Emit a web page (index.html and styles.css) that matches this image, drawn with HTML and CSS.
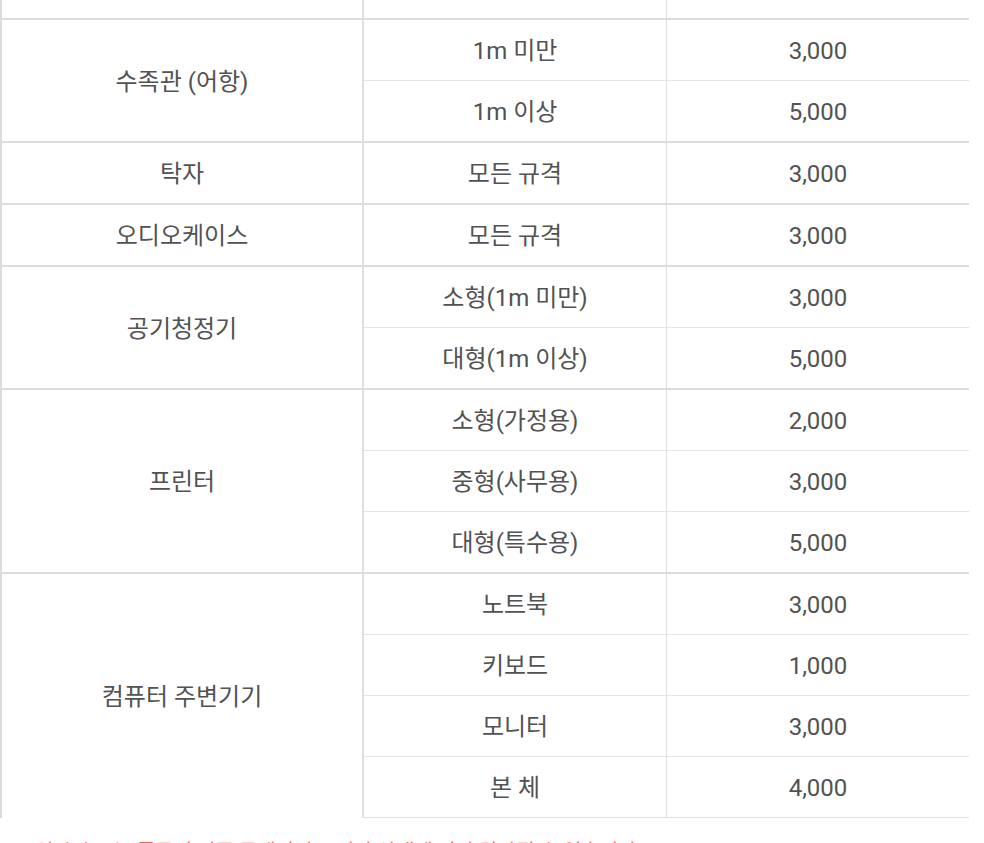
FILE: index.html
```html
<!DOCTYPE html>
<html lang="ko">
<head>
<meta charset="utf-8">
<title>수수료 표</title>
<link rel="stylesheet" href="styles.css">
</head>
<body>
<div class="page">
  <table class="fee">
    <colgroup>
      <col class="c1"><col class="c2"><col class="c3">
    </colgroup>
    <tbody>
      <tr class="prev">
        <td class="name"></td><td class="size">대형</td><td class="price">10,000</td>
      </tr>
      <tr class="grp">
        <td class="name" rowspan="2">수족관 (어항)</td><td class="size">1m 미만</td><td class="price">3,000</td>
      </tr>
      <tr>
        <td class="size">1m 이상</td><td class="price">5,000</td>
      </tr>
      <tr class="grp">
        <td class="name">탁자</td><td class="size">모든 규격</td><td class="price">3,000</td>
      </tr>
      <tr class="grp">
        <td class="name">오디오케이스</td><td class="size">모든 규격</td><td class="price">3,000</td>
      </tr>
      <tr class="grp">
        <td class="name" rowspan="2">공기청정기</td><td class="size">소형(1m 미만)</td><td class="price">3,000</td>
      </tr>
      <tr>
        <td class="size">대형(1m 이상)</td><td class="price">5,000</td>
      </tr>
      <tr class="grp">
        <td class="name" rowspan="3">프린터</td><td class="size">소형(가정용)</td><td class="price">2,000</td>
      </tr>
      <tr>
        <td class="size">중형(사무용)</td><td class="price">3,000</td>
      </tr>
      <tr>
        <td class="size">대형(특수용)</td><td class="price">5,000</td>
      </tr>
      <tr class="grp">
        <td class="name" rowspan="4">컴퓨터 주변기기</td><td class="size">노트북</td><td class="price">3,000</td>
      </tr>
      <tr>
        <td class="size">키보드</td><td class="price">1,000</td>
      </tr>
      <tr>
        <td class="size">모니터</td><td class="price">3,000</td>
      </tr>
      <tr class="last">
        <td class="size">본 체</td><td class="price">4,000</td>
      </tr>
    </tbody>
  </table>
  <p class="note">※ 위 수수료는 품목별 기준 금액이며 크기와 상태에 따라 달라질 수 있습니다.</p>
</div>
</body>
</html>
```

FILE: styles.css
```css
html, body {
  margin: 0;
  padding: 0;
  background: #ffffff;
}

.page {
  width: 984px;
  height: 843px;
  overflow: hidden;
  font-family: Roboto, "Noto Sans CJK KR", sans-serif;
  color: #525252;
}

.fee {
  width: 969px;
  margin-top: -43px;
  border-collapse: separate;
  border-spacing: 0;
  table-layout: fixed;
  border-left: 2px solid #dcdcdc;
  font-size: 24px;
}

.c1 { width: 362px; }
.c2 { width: 303px; }
.c3 { width: 302px; }

.fee td {
  padding: 2px 0 0;
  height: 58px;
  text-align: center;
  vertical-align: middle;
  border-top: 1px solid #e4e4e4;
  line-height: 30px;
}

.fee td.name {
  border-right: 2px solid #e0e0e0;
}

.fee td.size {
  border-right: 1px solid #dedede;
}

.fee tr.grp td {
  border-top: 2px solid #dcdcdc;
}

.fee tr.prev td {
  height: 59px;
  border-top: none;
}

.fee tr.last td {
  border-bottom: 1px solid #e0e0e0;
}

.note {
  margin: 19px 0 0 10px;
  font-size: 20px;
  line-height: 30px;
  color: #e8605a;
  white-space: nowrap;
}
```
